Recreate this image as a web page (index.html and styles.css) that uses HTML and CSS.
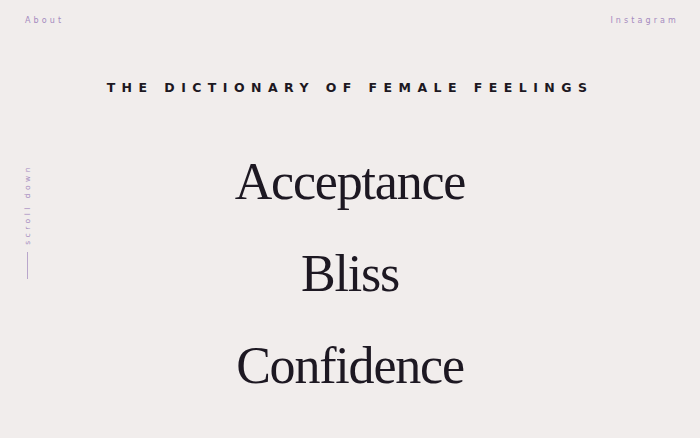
FILE: index.html
```html
<!DOCTYPE html>
<html lang="en">
<head>
<meta charset="utf-8">
<title>The Dictionary of Female Feelings</title>
<link rel="stylesheet" href="styles.css">
</head>
<body>
<div class="page">
  <header class="topbar">
    <a class="navlink" href="#">About</a>
    <a class="navlink" href="#">Instagram</a>
  </header>
  <h1 class="title">The Dictionary of Female Feelings</h1>
  <div class="scroll">
    <span class="scroll-text">scroll down</span>
    <span class="scroll-line"></span>
  </div>
  <ul class="words">
    <li class="word">Acceptance</li>
    <li class="word">Bliss</li>
    <li class="word">Confidence</li>
  </ul>
</div>
</body>
</html>
```
FILE: styles.css
```css
html, body {
  margin: 0;
  padding: 0;
  background: #f1edec;
  overflow: hidden;
}
.page {
  position: relative;
  width: 700px;
  height: 438px;
  color: #1d1822;
}
.topbar {
  display: flex;
  justify-content: space-between;
  padding: 16px 21px 0 25px;
}
.navlink {
  font-family: "DejaVu Sans", sans-serif;
  font-size: 8px;
  letter-spacing: 3.1px;
  color: #a58bbf;
  text-decoration: none;
  line-height: 10px;
}
.title {
  margin: 54px 0 0;
  text-align: center;
  font-family: "DejaVu Sans", sans-serif;
  font-weight: bold;
  font-size: 12.5px;
  letter-spacing: 6.45px;
  text-transform: uppercase;
  line-height: 16px;
}
.scroll {
  position: absolute;
  left: 21px;
  top: 164px;
  display: flex;
  flex-direction: column;
  align-items: center;
  width: 12px;
}
.scroll-text {
  writing-mode: vertical-rl;
  transform: rotate(180deg);
  font-family: "DejaVu Sans", sans-serif;
  font-size: 7.5px;
  letter-spacing: 3.5px;
  color: #a58bbf;
}
.scroll-line {
  display: block;
  width: 1px;
  height: 27px;
  margin-top: 7px;
  background: #b9a6cb;
}
.words {
  list-style: none;
  margin: 40px 0 0;
  padding: 0;
  text-align: center;
}
.word {
  font-family: "Liberation Serif", serif;
  font-size: 52px;
  letter-spacing: -1.2px;
  line-height: 92px;
}
```
